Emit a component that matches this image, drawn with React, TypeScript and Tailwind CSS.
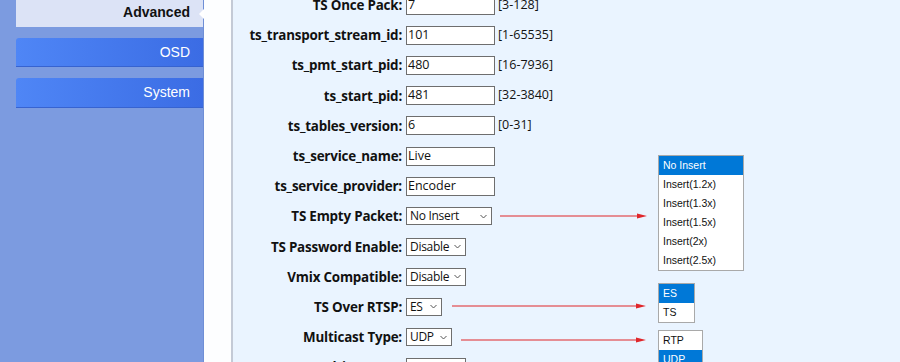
import React from 'react'

type Row =
  | { label: string; kind: 'input'; value: string; range?: string; width?: number }
  | { label: string; kind: 'select'; value: string; width: number }

const ROWS: Row[] = [
  { label: 'TS Once Pack:', kind: 'input', value: '7', range: '[3-128]' },
  { label: 'ts_transport_stream_id:', kind: 'input', value: '101', range: '[1-65535]' },
  { label: 'ts_pmt_start_pid:', kind: 'input', value: '480', range: '[16-7936]' },
  { label: 'ts_start_pid:', kind: 'input', value: '481', range: '[32-3840]' },
  { label: 'ts_tables_version:', kind: 'input', value: '6', range: '[0-31]' },
  { label: 'ts_service_name:', kind: 'input', value: 'Live' },
  { label: 'ts_service_provider:', kind: 'input', value: 'Encoder' },
  { label: 'TS Empty Packet:', kind: 'select', value: 'No Insert', width: 86 },
  { label: 'TS Password Enable:', kind: 'select', value: 'Disable', width: 60 },
  { label: 'Vmix Compatible:', kind: 'select', value: 'Disable', width: 60 },
  { label: 'TS Over RTSP:', kind: 'select', value: 'ES', width: 36 },
  { label: 'Multicast Type:', kind: 'select', value: 'UDP', width: 46 },
  { label: 'Multicast TTL:', kind: 'input', value: '', width: 60 },
]

function Chevron() {
  return (
    <svg width="7" height="5" viewBox="0 0 7 5" className="shrink-0">
      <path d="M0.5 1 L3.5 4 L6.5 1" fill="none" stroke="#555" strokeWidth="1" />
    </svg>
  )
}

function Arrow({ x1, x2, y }: { x1: number; x2: number; y: number }) {
  const w = x2 - x1
  return (
    <svg className="absolute" style={{ left: x1, top: y - 4, width: w, height: 8 }} viewBox={`0 0 ${w} 8`}>
      <line x1="0" y1="4" x2={w - 8} y2="4" stroke="#e0262b" strokeWidth="1.2" />
      <path d={`M${w - 10} 1.5 L${w} 4 L${w - 10} 6.5 Z`} fill="#e0262b" />
    </svg>
  )
}

function DropList({ items, active, left, top, width }: { items: string[]; active: number; left: number; top: number; width: number }) {
  return (
    <div
      className="absolute border border-[#a9a9a9] bg-white font-['Liberation_Sans',Arial,sans-serif] text-[10.5px] text-[#111]"
      style={{ left, top, width }}
    >
      {items.map((it, i) => (
        <div
          key={it}
          className={
            i === active
              ? 'flex h-[19px] items-center bg-[#0078d7] pl-1 text-white'
              : 'flex h-[19px] items-center pl-1'
          }
        >
          {it}
        </div>
      ))}
    </div>
  )
}

export default function App() {
  return (
    <div className="relative flex h-[362px] w-[900px] overflow-hidden">
      <aside className="w-[204px] shrink-0 border-r border-[#6f8fd6] bg-[#7c9be0] pl-4 font-['Liberation_Sans',Arial,sans-serif] text-[14px]">
        <div className="-mt-[2px] flex flex-col gap-[11px]">
          <div className="relative flex h-[29px] items-center justify-end rounded-tl-[3px] bg-[#dce3f6] pr-[13px] font-bold text-[#111]">
            Advanced
            <span className="absolute right-[-1px] top-[11px] h-0 w-0 border-y-[5px] border-r-[5px] border-y-transparent border-r-white" />
          </div>
          <div className="flex h-[29px] items-center justify-end rounded-tl-[3px] border-b border-[#3763d0] bg-gradient-to-r from-[#4f86f6] to-[#3b6ce4] pr-[13px] text-white">
            OSD
          </div>
          <div className="flex h-[30px] items-center justify-end rounded-tl-[3px] border-b border-[#3763d0] bg-gradient-to-r from-[#4f86f6] to-[#3b6ce4] pr-[13px] text-white">
            System
          </div>
        </div>
      </aside>
      <div className="w-[29px] shrink-0 border-r-2 border-[#c4cad6] bg-[#fdfeff]" />
      <main className="flex-1 bg-[#eaf4ff] font-['Open_Sans',Arial,sans-serif] text-[#111]">
        <div className="-mt-[10px] flex flex-col">
          {ROWS.map((r) => (
            <div key={r.label} className="flex h-[30.2px] items-center">
              <div className="w-[173px] shrink-0 pr-[4px] text-right text-[13.4px] font-bold tracking-[-0.2px]">{r.label}</div>
              {r.kind === 'input' ? (
                <>
                  <div
                    className="flex h-[19px] items-center border border-[#6e6e6e] bg-white pl-[1px] text-[12.5px]"
                    style={{ width: r.width ?? 89 }}
                  >
                    {r.value}
                  </div>
                  {r.range && <span className="ml-[3px] text-[12.5px]">{r.range}</span>}
                </>
              ) : (
                <div
                  className="flex h-[18px] items-center justify-between border border-[#6e6e6e] bg-white pl-[3px] pr-[4px] text-[12px] tracking-[-0.3px]"
                  style={{ width: r.width }}
                >
                  <span>{r.value}</span>
                  <Chevron />
                </div>
              )}
            </div>
          ))}
        </div>
      </main>
      <Arrow x1={500} x2={647} y={216} />
      <Arrow x1={452} x2={646} y={306} />
      <Arrow x1={461} x2={646} y={340} />
      <DropList
        items={['No Insert', 'Insert(1.2x)', 'Insert(1.3x)', 'Insert(1.5x)', 'Insert(2x)', 'Insert(2.5x)']}
        active={0}
        left={658}
        top={155}
        width={86}
      />
      <DropList items={['ES', 'TS']} active={0} left={658} top={283} width={37} />
      <DropList items={['RTP', 'UDP']} active={1} left={658} top={330} width={45} />
    </div>
  )
}
